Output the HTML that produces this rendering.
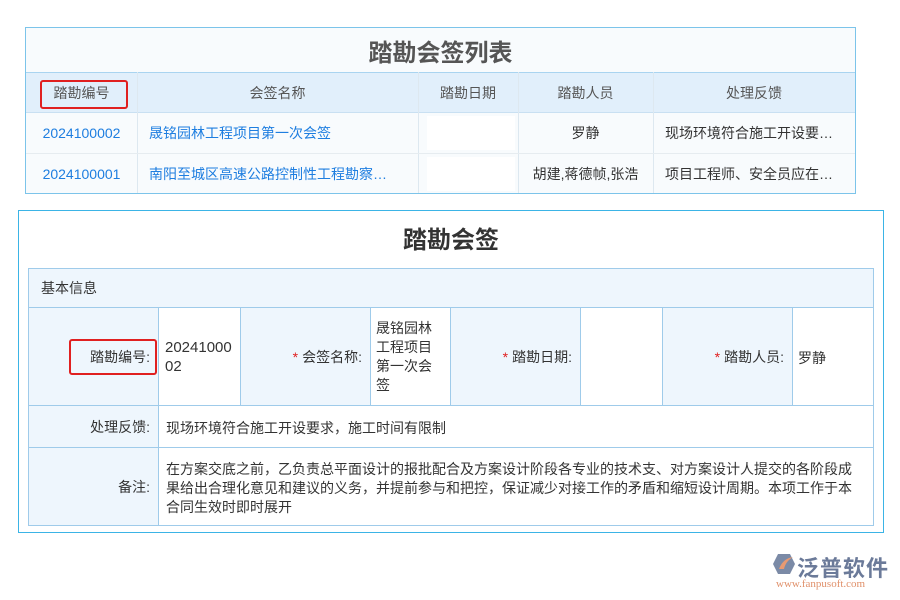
<!DOCTYPE html><html><head><meta charset="utf-8"><style>
body{margin:0;width:900px;height:600px;background:#fff;position:relative;overflow:hidden;font-family:"Liberation Sans","Noto Sans CJK SC",sans-serif;font-size:14px;color:#333}
.a{position:absolute;box-sizing:border-box}
.c{display:flex;align-items:center;justify-content:center}
.l{display:flex;align-items:center;padding-left:12px}
.r{display:flex;align-items:center;justify-content:flex-end;padding-right:8px}
.blue{color:#1e7ee0}
.star{color:#e02020;margin-right:4px}
</style></head><body>
<div class="a" style="left:25px;top:27px;width:831px;height:167px;border:1px solid #7cc4ea;background:#f8fbfd"></div>
<div class="a c" style="left:26px;top:28px;width:829px;height:44px;font-size:24px;font-weight:bold;color:#555">踏勘会签列表</div>
<div class="a" style="left:26px;top:72px;width:829px;height:41px;background:#e1effb;border-top:1px solid #a9d4f0;border-bottom:1px solid #c9e0f2"></div>
<div class="a" style="left:137px;top:72px;width:1px;height:121px;background:#dde8f0"></div>
<div class="a" style="left:418px;top:72px;width:1px;height:121px;background:#dde8f0"></div>
<div class="a" style="left:518px;top:72px;width:1px;height:121px;background:#dde8f0"></div>
<div class="a" style="left:653px;top:72px;width:1px;height:121px;background:#dde8f0"></div>
<div class="a" style="left:26px;top:153px;width:829px;height:1px;background:#e6ecf0"></div>
<div class="a c" style="left:26px;top:72px;width:111px;height:41px;color:#555">踏勘编号</div>
<div class="a" style="left:40px;top:80px;width:88px;height:29px;border:2px solid #e02020;border-radius:3px"></div>
<div class="a c" style="left:137px;top:72px;width:281px;height:41px;color:#555">会签名称</div>
<div class="a c" style="left:418px;top:72px;width:100px;height:41px;color:#555">踏勘日期</div>
<div class="a c" style="left:518px;top:72px;width:135px;height:41px;color:#555">踏勘人员</div>
<div class="a c" style="left:653px;top:72px;width:202px;height:41px;color:#555">处理反馈</div>
<div class="a" style="left:427px;top:116px;width:88px;height:34px;background:#fff"></div>
<div class="a" style="left:427px;top:157px;width:88px;height:34px;background:#fff"></div>
<div class="a c blue" style="left:26px;top:113px;width:111px;height:40px">2024100002</div>
<div class="a l blue" style="left:137px;top:113px;width:281px;height:40px">晟铭园林工程项目第一次会签</div>
<div class="a c" style="left:518px;top:113px;width:135px;height:40px">罗静</div>
<div class="a l" style="left:653px;top:113px;width:202px;height:40px">现场环境符合施工开设要…</div>
<div class="a c blue" style="left:26px;top:154px;width:111px;height:39px">2024100001</div>
<div class="a l blue" style="left:137px;top:154px;width:281px;height:39px">南阳至城区高速公路控制性工程勘察…</div>
<div class="a c" style="left:518px;top:154px;width:135px;height:39px">胡建,蒋德帧,张浩</div>
<div class="a l" style="left:653px;top:154px;width:202px;height:39px">项目工程师、安全员应在…</div>

<div class="a" style="left:18px;top:210px;width:866px;height:323px;border:1px solid #3bb4e6"></div>
<div class="a c" style="left:19px;top:212px;width:864px;height:50px;font-size:24px;font-weight:bold;color:#333">踏勘会签</div>
<div class="a" style="left:28px;top:268px;width:846px;height:258px;border:1px solid #9fcbea;background:#eef6fd"></div>
<div class="a l" style="left:29px;top:269px;width:844px;height:39px;border-bottom:1px solid #9fcbea;color:#333">基本信息</div>
<div class="a" style="left:158px;top:308px;width:82px;height:97px;background:#fff"></div>
<div class="a" style="left:370px;top:308px;width:80px;height:97px;background:#fff"></div>
<div class="a" style="left:580px;top:308px;width:82px;height:97px;background:#fff"></div>
<div class="a" style="left:792px;top:308px;width:81px;height:97px;background:#fff"></div>
<div class="a" style="left:158px;top:406px;width:715px;height:41px;background:#fff"></div>
<div class="a" style="left:158px;top:448px;width:715px;height:77px;background:#fff"></div>
<div class="a" style="left:29px;top:405px;width:844px;height:1px;background:#9fcbea"></div>
<div class="a" style="left:29px;top:447px;width:844px;height:1px;background:#9fcbea"></div>
<div class="a" style="left:158px;top:308px;width:1px;height:217px;background:#9fcbea"></div>
<div class="a" style="left:240px;top:308px;width:1px;height:97px;background:#9fcbea"></div>
<div class="a" style="left:370px;top:308px;width:1px;height:97px;background:#9fcbea"></div>
<div class="a" style="left:450px;top:308px;width:1px;height:97px;background:#9fcbea"></div>
<div class="a" style="left:580px;top:308px;width:1px;height:97px;background:#9fcbea"></div>
<div class="a" style="left:662px;top:308px;width:1px;height:97px;background:#9fcbea"></div>
<div class="a" style="left:792px;top:308px;width:1px;height:97px;background:#9fcbea"></div>
<div class="a r" style="left:29px;top:308px;width:129px;height:97px">踏勘编号:</div>
<div class="a" style="left:69px;top:339px;width:88px;height:36px;border:2px solid #e02020;border-radius:3px"></div>
<div class="a" style="left:165px;top:338px;width:72px;line-height:19px;font-size:15px">20241000<br>02</div>
<div class="a r" style="left:241px;top:308px;width:129px;height:97px"><span class="star">*</span>会签名称:</div>
<div class="a" style="left:376px;top:319px;width:60px;line-height:19px">晟铭园林工程项目第一次会签</div>
<div class="a r" style="left:451px;top:308px;width:129px;height:97px"><span class="star">*</span>踏勘日期:</div>
<div class="a r" style="left:663px;top:308px;width:129px;height:97px"><span class="star">*</span>踏勘人员:</div>
<div class="a" style="left:798px;top:348px">罗静</div>
<div class="a r" style="left:29px;top:406px;width:129px;height:41px">处理反馈:</div>
<div class="a" style="left:166px;top:418px">现场环境符合施工开设要求，施工时间有限制</div>
<div class="a r" style="left:29px;top:448px;width:129px;height:77px">备注:</div>
<div class="a" style="left:166px;top:460px;width:694px;line-height:19px">在方案交底之前，乙负责总平面设计的报批配合及方案设计阶段各专业的技术支、对方案设计人提交的各阶段成果给出合理化意见和建议的义务，并提前参与和把控，保证减少对接工作的矛盾和缩短设计周期。本项工作于本合同生效时即时展开</div>

<svg class="a" style="left:772px;top:553px" width="24" height="22" viewBox="0 0 24 22"><path d="M6 1h12l5 10-5 10H6L1 11z" fill="#7b8aa6"/><path d="M7 16c3-8 8-11 14-12-5 3-8 7-9 12z" fill="#e89a72"/></svg>
<div class="a" style="left:797px;top:551px;font-size:22px;font-weight:bold;color:#6b7a99;letter-spacing:1px">泛普软件</div>
<div class="a" style="left:776px;top:578px;font-size:11px;color:#e0906a;font-family:'Liberation Serif',serif">www.fanpusoft.com</div>
</body></html>
